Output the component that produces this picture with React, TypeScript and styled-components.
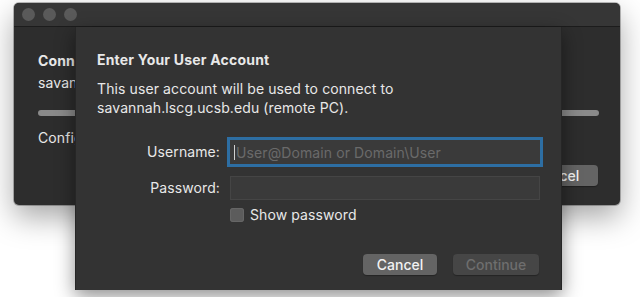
import React from 'react'
import styled, { createGlobalStyle } from 'styled-components'

const GlobalStyle = createGlobalStyle`
  html, body {
    margin: 0;
    padding: 0;
    background: #ffffff;
  }
  body {
    font-family: Inter, "Liberation Sans", Arial, sans-serif;
    -webkit-font-smoothing: antialiased;
  }
`

const Stage = styled.div`
  width: 640px;
  height: 297px;
  overflow: hidden;
  padding: 3px 0 0 14px;
  box-sizing: border-box;
`

const Window = styled.div`
  position: relative;
  width: 606px;
  height: 202px;
  background: #2d2d2d;
  border-radius: 5px;
  box-shadow: 0 12px 30px rgba(0, 0, 0, 0.35), 0 0 0 1px rgba(0, 0, 0, 0.25);
  display: flex;
  flex-direction: column;
`

const TitleBar = styled.div`
  height: 23px;
  background: #363636;
  border-radius: 5px 5px 0 0;
  border-bottom: 1px solid #1c1c1c;
  display: flex;
  align-items: center;
  gap: 8px;
  padding-left: 8px;
`

const Light = styled.span`
  width: 13px;
  height: 13px;
  border-radius: 50%;
  background: #5a5a5a;
`

const WindowBody = styled.div`
  flex: 1;
  padding: 26px 21px 0 24px;
  display: flex;
  flex-direction: column;
  color: #e8e8e8;
  font-size: 14px;
  letter-spacing: 0.1px;
`

const BgTitle = styled.div`
  font-weight: 700;
  line-height: 16px;
`

const BgLine = styled.div`
  margin-top: 6px;
  line-height: 16px;
`

const Progress = styled.div`
  margin-top: 19px;
  height: 6px;
  border-radius: 3px;
  background: #8a8a8a;
`

const BgFooter = styled.div`
  margin-top: 8px;
  display: flex;
  flex-direction: column;
`

const BgButtonRow = styled.div`
  display: flex;
  justify-content: flex-end;
  margin-top: 19px;
  padding-right: 1px;
`

const Sheet = styled.div`
  position: absolute;
  left: 61px;
  top: 24px;
  width: 487px;
  height: 263px;
  background: #333333;
  border-left: 1px solid #262626;
  border-right: 1px solid #262626;
  box-sizing: border-box;
  box-shadow: 0 6px 18px rgba(0, 0, 0, 0.45);
  padding: 24px 21px 0 21px;
  color: #e8e8e8;
  font-size: 14px;
  letter-spacing: 0.1px;
  display: flex;
  flex-direction: column;
`

const SheetTitle = styled.div`
  font-weight: 700;
  letter-spacing: 0.2px;
  line-height: 18px;
`

const Message = styled.div`
  margin-top: 10px;
  line-height: 19px;
`

const Form = styled.div`
  margin-top: 20px;
  display: grid;
  grid-template-columns: 123px 310px;
  column-gap: 10px;
  row-gap: 9px;
  align-items: center;
`

const Label = styled.label`
  text-align: right;
  line-height: 16px;
`

const Field = styled.div<{ $focused?: boolean }>`
  height: 24px;
  box-sizing: border-box;
  background: #3a3a3a;
  border: 1px solid ${p => (p.$focused ? '#3a3a3a' : '#454545')};
  box-shadow: ${p => (p.$focused ? '0 0 0 3px #2d6ea3' : 'none')};
  margin: ${p => (p.$focused ? '3px 0' : '0')};
  display: flex;
  align-items: center;
  padding-left: 3px;
  color: #6a6a6a;
  white-space: nowrap;
  overflow: hidden;
`

const Caret = styled.span`
  width: 1px;
  height: 15px;
  background: #d0d0d0;
  margin-right: 1px;
`

const CheckRow = styled.label`
  grid-column: 2;
  display: flex;
  align-items: center;
  gap: 6px;
  margin-top: -3px;
`

const Box = styled.span`
  width: 14px;
  height: 14px;
  border-radius: 3px;
  background: #5c5c5c;
  box-shadow: inset 0 0 0 1px #666;
`

const Buttons = styled.div`
  margin-top: auto;
  margin-bottom: 15px;
  display: flex;
  justify-content: flex-end;
  gap: 16px;
  padding-right: 1px;
`

const Button = styled.button<{ $disabled?: boolean; $width: number }>`
  width: ${p => p.$width}px;
  height: 21px;
  border: none;
  border-radius: 4px;
  font-family: inherit;
  font-size: 14px;
  font-weight: 500;
  padding: 0;
  background: ${p => (p.$disabled ? '#464646' : '#646464')};
  color: ${p => (p.$disabled ? '#6e6e6e' : '#f2f2f2')};
  box-shadow: 0 1px 1px rgba(0, 0, 0, 0.3);
`

export default function App() {
  return (
    <>
      <GlobalStyle />
      <Stage>
        <Window>
          <TitleBar>
            <Light />
            <Light />
            <Light />
          </TitleBar>
          <WindowBody>
            <BgTitle>Connecting</BgTitle>
            <BgLine>savannah</BgLine>
            <Progress />
            <BgFooter>
              <BgLine>Configuring</BgLine>
              <BgButtonRow>
                <Button $width={84}>Cancel</Button>
              </BgButtonRow>
            </BgFooter>
          </WindowBody>
          <Sheet>
            <SheetTitle>Enter Your User Account</SheetTitle>
            <Message>
              This user account will be used to connect to
              <br />
              savannah.lscg.ucsb.edu (remote PC).
            </Message>
            <Form>
              <Label>Username:</Label>
              <Field $focused>
                <Caret />
                User@Domain or Domain\User
              </Field>
              <Label>Password:</Label>
              <Field />
              <CheckRow>
                <Box />
                Show password
              </CheckRow>
            </Form>
            <Buttons>
              <Button $width={74}>Cancel</Button>
              <Button $width={86} $disabled>
                Continue
              </Button>
            </Buttons>
          </Sheet>
        </Window>
      </Stage>
    </>
  )
}
